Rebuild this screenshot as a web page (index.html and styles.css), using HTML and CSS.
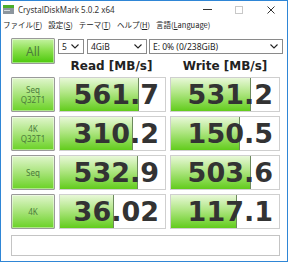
FILE: index.html
```html
<!DOCTYPE html>
<html lang="ja">
<head>
    <meta charset="UTF-8">
    <title>CrystalDiskMark 5.0.2 x64</title>
    <link rel="stylesheet" href="styles.css">
</head>
<body>
    <div class="window">
        <div class="titlebar">
            <svg class="app-icon" width="11" height="9" viewBox="0 0 11 9">
                <rect x="0" y="0" width="11" height="3" fill="#4caf2a"/>
                <rect x="0" y="3" width="11" height="6" fill="#8c969e"/>
                <rect x="1" y="5" width="6" height="1" fill="#d8dde0"/>
            </svg>
            <span class="title">CrystalDiskMark 5.0.2 x64</span>
            <div class="controls">
                <span class="ctl">
                    <svg width="9" height="9" viewBox="0 0 9 9"><line x1="0" y1="4.5" x2="9" y2="4.5" stroke="#333" stroke-width="1"/></svg>
                </span>
                <span class="ctl">
                    <svg width="8" height="8" viewBox="0 0 8 8"><rect x="0.5" y="0.5" width="7" height="7" fill="none" stroke="#c8c8c8" stroke-width="1"/></svg>
                </span>
                <span class="ctl">
                    <svg width="8" height="8" viewBox="0 0 8 8"><path d="M0.5 0.5 L7.5 7.5 M7.5 0.5 L0.5 7.5" stroke="#333" stroke-width="1"/></svg>
                </span>
            </div>
        </div>

        <div class="menubar">
            <span>ファイル(<u>F</u>)</span>
            <span>設定(<u>S</u>)</span>
            <span>テーマ(<u>T</u>)</span>
            <span>ヘルプ(<u>H</u>)</span>
            <span>言語(<u>L</u>anguage)</span>
        </div>

        <div class="content">
            <div class="top">
                <div class="btn all">All</div>
                <div class="top-right">
                    <div class="combos">
                        <div class="combo combo-count"><span>5</span><svg class="chev" width="8" height="5" viewBox="0 0 8 5"><path d="M0.5 0.5 L4 4 L7.5 0.5" fill="none" stroke="#222" stroke-width="1.1"/></svg></div>
                        <div class="combo combo-size"><span>4GiB</span><svg class="chev" width="8" height="5" viewBox="0 0 8 5"><path d="M0.5 0.5 L4 4 L7.5 0.5" fill="none" stroke="#222" stroke-width="1.1"/></svg></div>
                        <div class="combo combo-drive"><span>E: 0% (0/238GiB)</span><svg class="chev" width="8" height="5" viewBox="0 0 8 5"><path d="M0.5 0.5 L4 4 L7.5 0.5" fill="none" stroke="#222" stroke-width="1.1"/></svg></div>
                    </div>
                    <div class="headers">
                        <span>Read [MB/s]</span>
                        <span>Write [MB/s]</span>
                    </div>
                </div>
            </div>

            <div class="rows">
                <div class="btn label">Seq<br>Q32T1</div>
                <div class="cell"><div class="bar" style="width: 75.0%"></div><span class="val">561.7</span></div>
                <div class="cell"><div class="bar" style="width: 74.5%"></div><span class="val">531.2</span></div>

                <div class="btn label">4K<br>Q32T1</div>
                <div class="cell"><div class="bar" style="width: 69.8%"></div><span class="val">310.2</span></div>
                <div class="cell"><div class="bar" style="width: 63.6%"></div><span class="val">150.5</span></div>

                <div class="btn label">Seq</div>
                <div class="cell"><div class="bar" style="width: 74.5%"></div><span class="val">532.9</span></div>
                <div class="cell"><div class="bar" style="width: 74.0%"></div><span class="val">503.6</span></div>

                <div class="btn label">4K</div>
                <div class="cell"><div class="bar" style="width: 51.1%"></div><span class="val">36.02</span></div>
                <div class="cell"><div class="bar" style="width: 61.4%"></div><span class="val">117.1</span></div>
            </div>

            <div class="comment"></div>
        </div>
    </div>
</body>
</html>
```

FILE: styles.css
```css
* {
    box-sizing: border-box;
}
body {
    margin: 0;
    background: #fff;
    font-family: "Noto Sans", "Noto Sans CJK JP", sans-serif;
    color: #222;
}
.window {
    width: 288px;
    height: 262px;
    border: 1px solid #2f86d6;
    background: #fff;
    display: flex;
    flex-direction: column;
}
.titlebar {
    height: 17px;
    display: flex;
    align-items: center;
    padding-left: 2px;
    font-size: 8px;
    color: #333;
}
.app-icon {
    margin-right: 4px;
}
.title {
    flex: 1;
}
.controls {
    display: flex;
    align-items: center;
}
.ctl {
    width: 32px;
    display: flex;
    justify-content: center;
}
.menubar {
    height: 12px;
    display: flex;
    align-items: center;
    gap: 6px;
    padding-left: 2px;
    font-size: 7.5px;
    font-family: "Noto Sans CJK JP", sans-serif;
}
.content {
    padding: 8px 0 0 10px;
}
.top {
    display: grid;
    grid-template-columns: 44px 1fr;
    column-gap: 3px;
    height: 39px;
}
.btn {
    border: 1px solid #9a9a9a;
    border-radius: 1px;
    display: flex;
    flex-direction: column;
    align-items: center;
    justify-content: center;
    text-align: center;
    color: #4c7c3c;
    box-shadow: inset 0 0 0 1px rgba(255, 255, 255, 0.45);
}
.all {
    height: 26px;
    font-size: 12px;
    background: linear-gradient(#c4f2a2, #86de48 50%, #4cc80c);
}
.combos {
    display: flex;
    height: 15px;
    margin-top: 1px;
    font-size: 8.5px;
}
.combo {
    border: 1px solid #8a8a8a;
    background: #fff;
    display: flex;
    align-items: center;
    justify-content: space-between;
    padding: 0 4px 0 3px;
}
.combo-count {
    width: 26px;
}
.combo-size {
    width: 60px;
    margin-left: 3px;
}
.combo-drive {
    width: 134px;
    margin-left: 2px;
}
.headers {
    display: grid;
    grid-template-columns: 107px 110px;
    column-gap: 5px;
    margin-top: 5px;
    font: bold 12px "DejaVu Sans", sans-serif;
    text-align: center;
    color: #222;
}
.rows {
    display: grid;
    grid-template-columns: 44px 107px 110px;
    column-gap: 4px;
    row-gap: 4px;
    grid-auto-rows: 35px;
}
.label {
    font-size: 8px;
    line-height: 10px;
    background: linear-gradient(#e0f6cc, #a8e47a 50%, #6ad226);
}
.cell {
    position: relative;
    border: 1px solid #cfcfcf;
    background: #fff;
    text-align: right;
    padding-right: 6px;
    overflow: hidden;
}
.bar {
    position: absolute;
    left: 0;
    top: 0;
    bottom: 0;
    background: linear-gradient(#e8f8d8, #b0e684 45%, #62cc1c);
    border-right: 1px solid #6c8a5c;
}
.val {
    position: relative;
    font: bold 27px/33px "DejaVu Sans", sans-serif;
    color: #333;
}
.comment {
    margin-top: 6px;
    width: 269px;
    height: 21px;
    border: 1px solid #c4c4c4;
    background: #fff;
}
```
